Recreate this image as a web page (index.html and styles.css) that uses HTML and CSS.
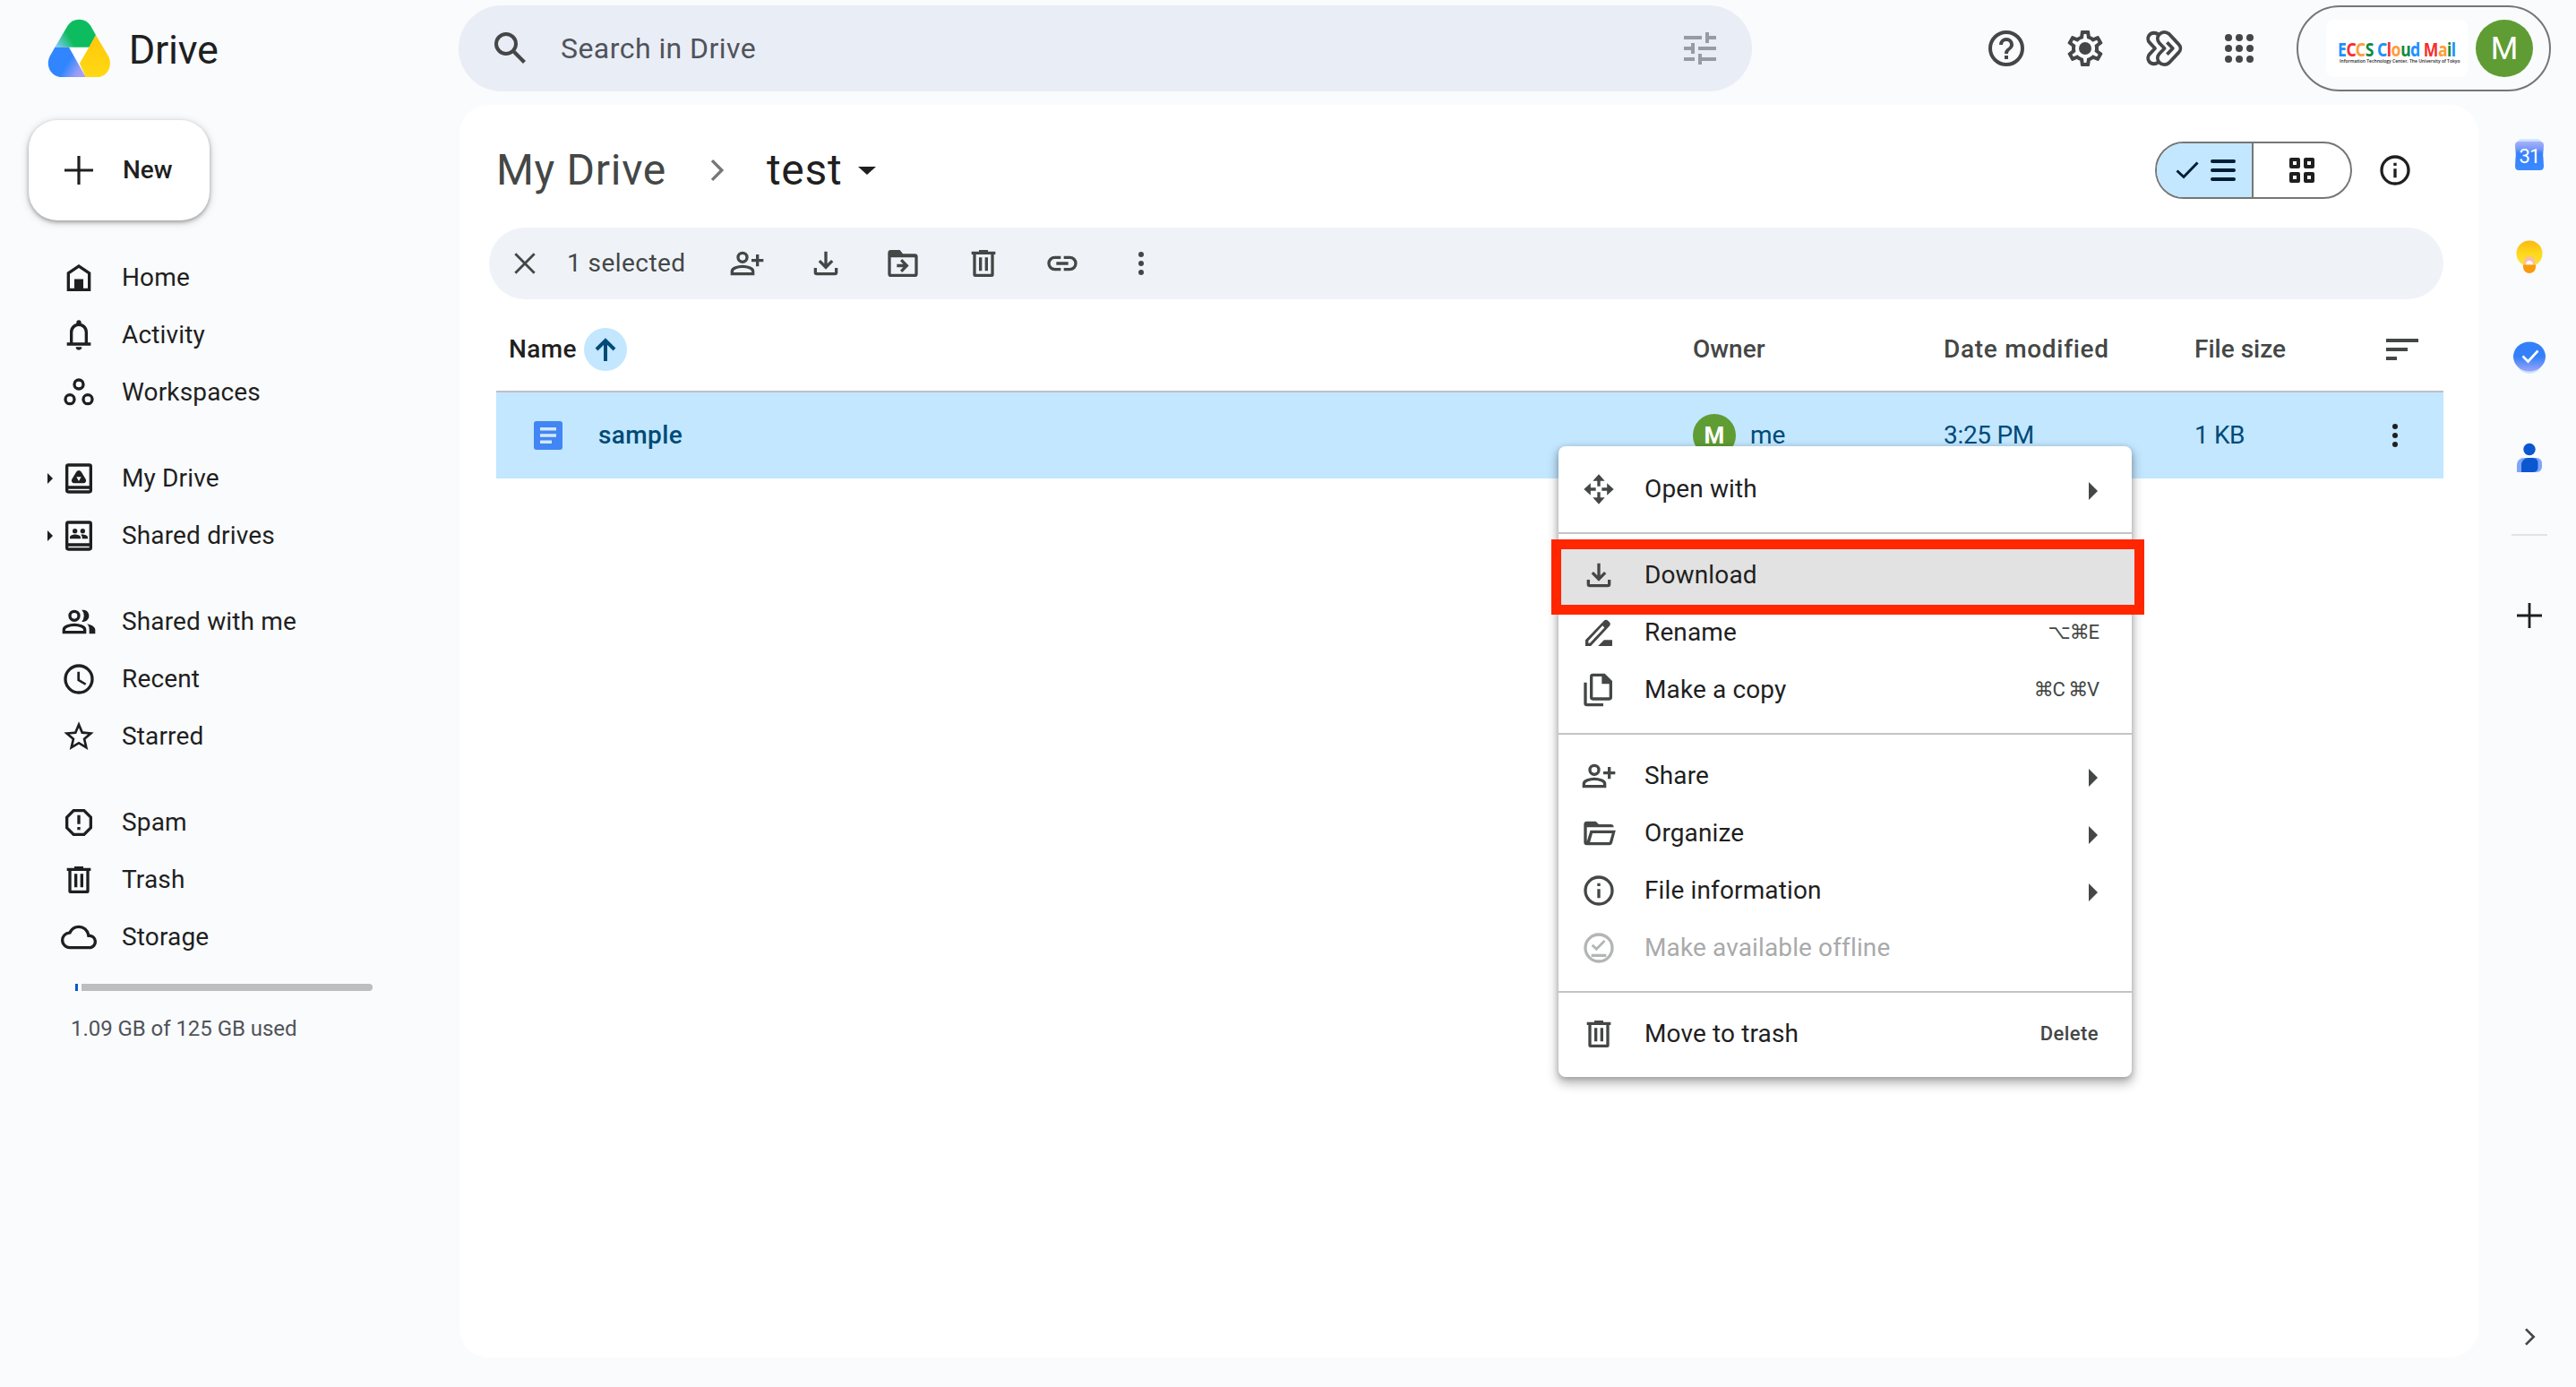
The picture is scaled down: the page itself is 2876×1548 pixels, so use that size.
FILE: index.html
```html
<!DOCTYPE html>
<html lang="en">
<head>
<meta charset="utf-8">
<title>test - Google Drive</title>
<link rel="stylesheet" href="styles.css">
</head>
<body>
<svg class="sprite" aria-hidden="true">
  <symbol id="i-plus" viewBox="0 0 24 24"><path d="M11.2 4h1.6v7.2H20v1.6h-7.2V20h-1.6v-7.2H4v-1.6h7.2z"/></symbol>
  <symbol id="i-home" viewBox="0 0 24 24"><path fill-rule="evenodd" d="M12 3l8 5.4V21H4V8.400zM6 9.500V19h3v-6h6v6h3V9.500L12 5.400z"/><path d="M9 13h6v7H9z"/></symbol>
  <symbol id="i-bell" viewBox="0 0 24 24"><path fill-rule="evenodd" d="M4 19v-2h2v-7c0-2.800 1.800-5.100 4.400-5.800v-.700a1.600 1.600 0 013.200 0v.700C16.200 4.900 18 7.200 18 10v7h2v2zM8 17h8v-7a4 4 0 00-8 0zM10 20h4a2 2 0 01-4 0z"/></symbol>
  <symbol id="i-work" viewBox="0 0 24 24"><g fill="none" stroke="currentColor" stroke-width="2"><circle cx="12" cy="6" r="3"/><circle cx="6" cy="16" r="3"/><circle cx="18" cy="16" r="3"/></g></symbol>
  <symbol id="i-mydrive" viewBox="0 0 24 24"><path fill-rule="evenodd" d="M5 2h14a2 2 0 012 2v16a2 2 0 01-2 2H5a2 2 0 01-2-2V4a2 2 0 012-2zm0 2v13h14V4zm0 15v1h14v-1z"/><path fill-rule="evenodd" d="M10.400 7.500a1.850 1.850 0 013.200 0l2.900 4.800a1.800 1.800 0 01-1.600 2.900H9.100a1.800 1.800 0 01-1.600-2.900zM10.400 11l1.600 2.800 1.600-2.800z"/></symbol>
  <symbol id="i-shdrive" viewBox="0 0 24 24"><path fill-rule="evenodd" d="M5 2h14a2 2 0 012 2v16a2 2 0 01-2 2H5a2 2 0 01-2-2V4a2 2 0 012-2zm0 2v13h14V4zm0 15v1h14v-1z"/><circle cx="9.400" cy="8.800" r="1.600"/><circle cx="14.600" cy="8.800" r="1.600"/><path d="M6 14v-.900c0-1.400 2-2 3.500-2s3.700.600 3.700 2v.900zM14.200 14v-1c0-.700-.3-1.300-.9-1.800 1.800-.3 4.700.3 4.700 1.900v.9z"/></symbol>
  <symbol id="i-people" viewBox="0 0 24 24"><g fill="none" stroke="currentColor" stroke-width="2"><circle cx="9" cy="8" r="3"/><path d="M2 19v-1.800C2 15.200 6 14 9 14s7 1.200 7 3.200V19z"/></g><path d="M14 4.100A4 4 0 1114 11.900 6 6 0 0014 4.100zM17.500 13.300c2.600.5 5.500 1.800 5.500 3.900V20h-4v-3c0-1.600-.5-2.800-1.500-3.700z"/></symbol>
  <symbol id="i-clock" viewBox="0 0 24 24"><circle cx="12" cy="12" r="9" fill="none" stroke="currentColor" stroke-width="2"/><path d="M11 7h1.600v5.200l4.400 2.600-.8 1.300L11 13z"/></symbol>
  <symbol id="i-star" viewBox="0 0 24 24"><path d="M22 9.240l-7.190-.620L12 2 9.190 8.630 2 9.240l5.460 4.730L5.820 21 12 17.270 18.180 21l-1.630-7.030zM12 15.400l-3.760 2.270 1-4.280-3.320-2.880 4.380-.380L12 6.100l1.710 4.040 4.380.38-3.320 2.880 1 4.280z"/></symbol>
  <symbol id="i-spam" viewBox="0 0 24 24"><path d="M8.500 4h7L20 8.500v7L15.500 20h-7L4 15.500v-7z" fill="none" stroke="currentColor" stroke-width="2"/><path d="M11 7h2v6h-2zM11 15h2v2h-2z"/></symbol>
  <symbol id="i-trash" viewBox="0 0 24 24"><path fill-rule="evenodd" d="M9 3h6v1h5v2h-1v13.500a1.500 1.500 0 01-1.500 1.500h-11A1.500 1.500 0 015 19.500V6H4V4h5zM7 6v13h10V6zM9 8h2v9H9zM13 8h2v9h-2z"/></symbol>
  <symbol id="i-cloud" viewBox="0 0 24 24"><path d="M19.350 10.040A7.490 7.490 0 0012 4C9.110 4 6.600 5.640 5.350 8.040A5.994 5.994 0 000 14c0 3.310 2.690 6 6 6h13c2.760 0 5-2.240 5-5 0-2.640-2.050-4.780-4.650-4.960zM19 18H6c-2.210 0-4-1.790-4-4 0-2.050 1.530-3.760 3.560-3.970l1.070-.110.5-.950A5.469 5.469 0 0112 6c2.620 0 4.880 1.860 5.390 4.430l.300 1.500 1.530.110A2.980 2.980 0 0122 15c0 1.650-1.350 3-3 3z"/></symbol>
  <symbol id="i-search" viewBox="0 0 24 24"><path d="M20.490 19l-5.730-5.730C15.530 12.200 16 10.910 16 9.500A6.500 6.500 0 109.500 16c1.410 0 2.700-.470 3.770-1.240L19 20.490zM5 9.500a4.500 4.500 0 119 0 4.500 4.500 0 01-9 0z"/></symbol>
  <symbol id="i-tune" viewBox="0 0 24 24"><path d="M3 17v2h6v-2H3zM3 5v2h10V5H3zm10 16v-2h8v-2h-8v-2h-2v6h2zM7 9v2H3v2h4v2h2V9H7zm14 4v-2H11v2h10zm-6-4h2V7h4V5h-4V3h-2v6z"/></symbol>
  <symbol id="i-help" viewBox="0 0 24 24"><circle cx="12" cy="12" r="9" fill="none" stroke="currentColor" stroke-width="2"/><path d="M11 16h2v2h-2zM12 6a4 4 0 00-4 4h2a2 2 0 114 0c0 2-3 1.750-3 5h2c0-2.250 3-2.500 3-5a4 4 0 00-4-4z"/></symbol>
  <symbol id="i-gear" viewBox="0 0 24 24"><path d="M19.430 12.980c.040-.320.070-.640.070-.980 0-.340-.030-.660-.070-.980l2.110-1.650c.190-.150.240-.420.120-.640l-2-3.460a.5.5 0 00-.610-.220l-2.490 1c-.520-.400-1.080-.730-1.690-.980l-.380-2.650A.488.488 0 0014 2h-4c-.250 0-.460.180-.490.420l-.380 2.650c-.610.250-1.170.590-1.690.980l-2.490-1a.566.566 0 00-.180-.030c-.170 0-.340.090-.430.250l-2 3.460c-.130.220-.070.490.120.640l2.110 1.650c-.040.320-.070.650-.070.980s.030.660.070.980l-2.110 1.650c-.190.150-.240.420-.120.640l2 3.460a.5.5 0 00.610.220l2.490-1c.520.400 1.080.730 1.690.980l.380 2.650c.030.240.240.420.490.420h4c.250 0 .460-.180.490-.420l.380-2.650c.610-.250 1.170-.590 1.690-.980l2.490 1c.060.020.120.030.180.030.170 0 .340-.090.430-.250l2-3.460c.120-.220.070-.490-.120-.640zm-1.980-1.710c.040.310.050.520.050.730 0 .210-.020.430-.050.730l-.140 1.130.890.700 1.080.840-.700 1.210-1.270-.510-1.040-.420-.900.680c-.430.320-.840.560-1.250.730l-1.060.430-.160 1.130-.200 1.350h-1.400l-.190-1.350-.160-1.130-1.060-.430c-.430-.180-.830-.410-1.230-.710l-.910-.700-1.060.430-1.270.510-.700-1.210 1.080-.840.890-.700-.140-1.130c-.030-.310-.050-.540-.050-.740s.020-.430.050-.730l.140-1.130-.890-.700-1.080-.840.700-1.210 1.270.510 1.040.420.900-.680c.430-.320.840-.560 1.250-.730l1.060-.430.160-1.130.200-1.350h1.390l.190 1.350.160 1.130 1.060.430c.430.180.830.410 1.230.710l.910.700 1.060-.430 1.270-.510.700 1.210-1.070.850-.890.700z"/><circle cx="12" cy="12" r="3.500"/></symbol>
  <symbol id="i-gem" viewBox="0 0 24 24"><g fill="none" stroke="currentColor" stroke-width="1.900" stroke-linejoin="round"><path d="M9.200 4.600C7.700 2.900 4.900 3 3.700 4.700c-.9 1.300-.8 3 .3 4.100l3 3.200-3 3.200c-1.100 1.100-1.200 2.800-.3 4.100 1.200 1.700 4 1.800 5.500.1"/><path d="M9.500 4.100c1.500-1.500 3.800-1.500 5.400-.1l5.300 5.700c1.300 1.300 1.300 3.300 0 4.600l-5.300 5.700c-1.600 1.400-3.900 1.400-5.400-.1-1.400-1.400-1.400-3.400-.1-4.900l2.900-3-2.900-3c-1.300-1.500-1.300-3.500.1-4.900z"/><path d="M13.700 8.600l3.200 3.400-3.200 3.400"/></g></symbol>
  <symbol id="i-apps" viewBox="0 0 24 24"><circle cx="6" cy="6" r="2"/><circle cx="12" cy="6" r="2"/><circle cx="18" cy="6" r="2"/><circle cx="6" cy="12" r="2"/><circle cx="12" cy="12" r="2"/><circle cx="18" cy="12" r="2"/><circle cx="6" cy="18" r="2"/><circle cx="12" cy="18" r="2"/><circle cx="18" cy="18" r="2"/></symbol>
  <symbol id="i-close" viewBox="0 0 24 24"><path d="M5.600 5.600l12.800 12.800M18.400 5.600L5.600 18.400" fill="none" stroke="currentColor" stroke-width="1.700"/></symbol>
  <symbol id="i-adduser" viewBox="0 0 24 24"><g fill="none" stroke="currentColor" stroke-width="2"><circle cx="9" cy="8" r="3"/><path d="M2 19v-1.800C2 15.200 6 14 9 14s7 1.200 7 3.200V19z"/></g><path d="M18 6h2v3h3v2h-3v3h-2v-3h-3V9h3z"/></symbol>
  <symbol id="i-download" viewBox="0 0 24 24"><path d="M11 4h2v8.200l2.600-2.600L17 11l-5 5-5-5 1.400-1.400 2.600 2.600zM4 15h2v3h12v-3h2v3a2 2 0 01-2 2H6a2 2 0 01-2-2z"/></symbol>
  <symbol id="i-move" viewBox="0 0 24 24"><path fill-rule="evenodd" d="M4 3h6l2 2.500h8a2 2 0 012 2V19a2 2 0 01-2 2H4a2 2 0 01-2-2V5a2 2 0 012-2zm0 5v11h16V8z"/><path d="M11.600 9l4.400 4.500-4.400 4.500-1.400-1.400 2-2.100H8v-2h4.200l-2-2.100z"/></symbol>
  <symbol id="i-link" viewBox="0 0 24 24"><path d="M17 7h-4v2h4a3 3 0 010 6h-4v2h4a5 5 0 000-10zM11 15H7a3 3 0 010-6h4V7H7a5 5 0 000 10h4zM8 11h8v2H8z"/></symbol>
  <symbol id="i-more" viewBox="0 0 24 24"><circle cx="12" cy="6" r="1.800"/><circle cx="12" cy="12" r="1.800"/><circle cx="12" cy="18" r="1.800"/></symbol>
  <symbol id="i-info" viewBox="0 0 24 24"><circle cx="12" cy="12" r="9" fill="none" stroke="currentColor" stroke-width="2"/><path d="M11 7h2v2h-2zM11 11h2v6h-2z"/></symbol>
  <symbol id="i-sort" viewBox="0 0 24 24"><path d="M3 18h6v-2H3zM3 6v2h18V6zm0 7h12v-2H3z"/></symbol>
  <symbol id="i-openwith" viewBox="0 0 24 24"><path d="M12 2l4 4.500h-3V10h-2V6.500H8zM12 22l4-4.500h-3V14h-2v3.500H8zM2 12l4.500-4v3H10v2H6.500v3zM22 12l-4.500-4v3H14v2h3.500v3z"/></symbol>
  <symbol id="i-rename" viewBox="0 0 24 24"><path fill-rule="evenodd" d="M3 21v-4L15.500 4c.8-.8 1.800-.8 2.600 0l1 1c.8.800.8 1.800 0 2.600L6.700 21zm2-2h1L15.800 8.700l-1.300-1.300L5 17.500zM11.500 21l4-4H21v4z"/></symbol>
  <symbol id="i-copy" viewBox="0 0 24 24"><path fill-rule="evenodd" d="M8 1h8l5 5v11a2 2 0 01-2 2H8a2 2 0 01-2-2V3a2 2 0 012-2zm0 2v14h11V8h-5V3z"/><path d="M2 7h2v14h11v2H4a2 2 0 01-2-2z"/></symbol>
  <symbol id="i-folder" viewBox="0 0 24 24"><path fill-rule="evenodd" d="M4 4h6l2 2h8a2 2 0 012 2H4v9.500L6.300 10H23.300l-2.300 8.600a2 2 0 01-1.900 1.400H4a2 2 0 01-2-2V6a2 2 0 012-2zm3.800 8l-1.700 6h13l1.700-6z"/></symbol>
  <symbol id="i-offline" viewBox="0 0 24 24"><circle cx="12" cy="12" r="9" fill="none" stroke="currentColor" stroke-width="2"/><path d="M7 16h10v2H7zM16.500 7.800L10.400 14 7 10.600l1.200-1.200 2.200 2.200 4.900-5z"/></symbol>
  <symbol id="i-chevron" viewBox="0 0 24 24"><path d="M9 5.500l6.500 6.500L9 18.500" fill="none" stroke="currentColor" stroke-width="2"/></symbol>
</svg>

<div class="app">
  <header class="topbar">
    <a class="brand">
      <svg class="brand-logo" viewBox="158 62 212 197">
        <defs>
          <linearGradient id="gg" gradientUnits="userSpaceOnUse" x1="188" y1="158" x2="236" y2="128"><stop offset="0" stop-color="#86cbff"/><stop offset=".35" stop-color="#5cc7c4"/><stop offset="1" stop-color="#0dbc5f"/></linearGradient>
          <linearGradient id="gb" gradientUnits="userSpaceOnUse" x1="218" y1="222" x2="268" y2="252"><stop offset="0" stop-color="#3186ff"/><stop offset=".7" stop-color="#8f9cf5"/><stop offset="1" stop-color="#a79df5"/></linearGradient>
          <linearGradient id="gy" x1="0" y1="0" x2="0" y2="1"><stop offset="0" stop-color="#ffc808"/><stop offset="1" stop-color="#ffd814"/></linearGradient>
        </defs>
        <path fill="#fff" d="M230 157h68l-32 54z"/>
        <path fill="url(#gg)" d="M225 86Q239 64 264 64T303 86L320 117 298 157H183z"/>
        <path fill="url(#gb)" d="M183 157H230L286 257H206C170 257 150 219 166 187z"/>
        <path fill="url(#gy)" d="M320 117L362 187C378 219 358 257 325 257H286L266 211z"/>
      </svg>
      <span class="brand-name">Drive</span>
    </a>
    <div class="search">
      <svg class="ic48"><use href="#i-search"/></svg>
      <span class="search-text">Search in Drive</span>
      <svg class="ic48 tune"><use href="#i-tune"/></svg>
    </div>
    <div class="tools">
      <svg class="ic48"><use href="#i-help"/></svg>
      <svg class="ic48"><use href="#i-gear"/></svg>
      <svg class="ic48"><use href="#i-gem"/></svg>
      <svg class="ic48 apps"><use href="#i-apps"/></svg>
    </div>
    <div class="account">
      <div class="org">
        <div class="org-name"><b class="bl">E</b><b class="rd">C</b><b class="or">C</b><b class="gr">S</b> <b class="bl">C</b><b class="rd">l</b><b class="or">o</b><b class="gr">u</b><b class="bl">d</b> <b class="rd">M</b><b class="or">a</b><b class="gr">i</b><b class="bl">l</b></div>
        <div class="org-sub">Information Technology Center, The University of Tokyo</div>
      </div>
      <div class="avatar">M</div>
    </div>
  </header>

  <div class="body">
    <aside class="sidebar">
      <button class="new"><svg class="ic48"><use href="#i-plus"/></svg><span>New</span></button>
      <nav class="nav">
        <ul class="group">
          <li><i></i><svg class="ic40"><use href="#i-home"/></svg><span>Home</span></li>
          <li><i></i><svg class="ic40"><use href="#i-bell"/></svg><span>Activity</span></li>
          <li><i></i><svg class="ic40 low"><use href="#i-work"/></svg><span>Workspaces</span></li>
        </ul>
        <ul class="group">
          <li><i class="caret"></i><svg class="ic40"><use href="#i-mydrive"/></svg><span>My Drive</span></li>
          <li><i class="caret"></i><svg class="ic40"><use href="#i-shdrive"/></svg><span>Shared drives</span></li>
        </ul>
        <ul class="group">
          <li><i></i><svg class="ic40"><use href="#i-people"/></svg><span>Shared with me</span></li>
          <li><i></i><svg class="ic40"><use href="#i-clock"/></svg><span>Recent</span></li>
          <li><i></i><svg class="ic40"><use href="#i-star"/></svg><span>Starred</span></li>
        </ul>
        <ul class="group">
          <li><i></i><svg class="ic40"><use href="#i-spam"/></svg><span>Spam</span></li>
          <li><i></i><svg class="ic40"><use href="#i-trash"/></svg><span>Trash</span></li>
          <li><i></i><svg class="ic40"><use href="#i-cloud"/></svg><span>Storage</span></li>
        </ul>
      </nav>
      <div class="quota"><span class="used"></span><span class="free"></span></div>
      <div class="quota-text">1.09 GB of 125 GB used</div>
    </aside>

    <main class="panel">
      <div class="crumbs">
        <span class="crumb">My Drive</span>
        <svg class="ic40 sep"><use href="#i-chevron"/></svg>
        <span class="crumb current">test</span>
        <i class="drop"></i>
        <div class="view-toggle">
          <div class="seg on">
            <svg class="check" viewBox="0 0 26 20"><path d="M1.500 10.500l7.500 7L24.500 1.500" fill="none" stroke="currentColor" stroke-width="3"/></svg>
            <svg class="lines" viewBox="0 0 28 24"><path d="M2 2h24M2 12h24M2 22h24" fill="none" stroke="currentColor" stroke-width="4" stroke-linecap="round"/></svg>
          </div>
          <div class="seg">
            <svg class="gridic" viewBox="0 0 28 28"><g fill="none" stroke="currentColor" stroke-width="4" stroke-linejoin="round"><path d="M2 2h8v8H2zM18 2h8v8h-8zM2 18h8v8H2zM18 18h8v8h-8z"/></g></svg>
          </div>
        </div>
        <svg class="ic40 info"><use href="#i-info"/></svg>
      </div>

      <div class="selbar">
        <svg class="ic40"><use href="#i-close"/></svg>
        <span class="sel-text">1 selected</span>
        <div class="sel-actions">
          <svg class="ic40"><use href="#i-adduser"/></svg>
          <svg class="ic40"><use href="#i-download"/></svg>
          <svg class="ic40 mv"><use href="#i-move"/></svg>
          <svg class="ic40"><use href="#i-trash"/></svg>
          <svg class="ic40"><use href="#i-link"/></svg>
          <svg class="ic40"><use href="#i-more"/></svg>
        </div>
      </div>

      <div class="table">
        <div class="tr head">
          <div class="name"><span class="dark">Name</span><span class="sortdot"><svg viewBox="0 0 24 26"><path d="M12 26V3M2 13L12 3l10 10" fill="none" stroke="currentColor" stroke-width="4"/></svg></span></div>
          <div>Owner</div>
          <div class="date">Date modified</div>
          <div class="last"><span>File size</span><svg class="ic48"><use href="#i-sort"/></svg></div>
        </div>
        <div class="tr file">
          <div class="fname"><svg class="doc" viewBox="0 0 32 32"><rect width="32" height="32" rx="3" fill="#4285f4"/><path d="M7 7h18v3.500H7zM7 14.200h18v3.500H7zM7 21.400h13v3.500H7z" fill="#d3e8fc"/></svg><span>sample</span></div>
          <div class="owner"><span class="mini">M</span>me</div>
          <div class="time">3:25 PM</div>
          <div class="last"><span>1 KB</span><svg class="ic40 rowmore"><use href="#i-more"/></svg></div>
        </div>
      </div>
    </main>

    <aside class="rail">
      <svg class="app-ic" viewBox="0 0 40 40"><defs><linearGradient id="cal" x1="0" y1="0" x2="0" y2="1"><stop offset="0" stop-color="#a9b0fb"/><stop offset=".25" stop-color="#7a9cf8"/><stop offset=".4" stop-color="#3880fb"/><stop offset="1" stop-color="#3a8bff"/></linearGradient></defs><rect x="6" y="1.500" width="28" height="10" rx="5" fill="#c4e2ff"/><path fill="url(#cal)" d="M8 4h24c3 0 4 1.500 4 4.500 0 5-1.500 9-.5 14l.5 9c0 3-1.500 4.500-4 4.500H8c-2.500 0-4-1.500-4-4.500l.5-9c1-5-.5-9-.5-14C4 5.500 5 4 8 4z"/><text x="20" y="27.500" text-anchor="middle" class="cal-num">31</text></svg>
      <svg class="app-ic" viewBox="0 0 40 40"><defs><linearGradient id="kp" x1="0" y1="0" x2="0" y2="1"><stop offset="0" stop-color="#fdb813"/><stop offset=".55" stop-color="#fedb1c"/><stop offset="1" stop-color="#fde04a"/></linearGradient><radialGradient id="kg"><stop offset="0" stop-color="#fcb6cd"/><stop offset=".5" stop-color="#fbb7bd"/><stop offset="1" stop-color="#fdc94b" stop-opacity="0"/></radialGradient></defs><circle cx="20" cy="16" r="14.500" fill="url(#kp)"/><circle cx="20" cy="25" r="8" fill="url(#kg)"/><path d="M16 28.500a4 4.500 0 018 0z" fill="#fff"/><path d="M13 28.500h14v2.500a7 7 0 01-14 0z" fill="#f99c0b"/></svg>
      <svg class="app-ic" viewBox="0 0 40 40"><defs><linearGradient id="tk" x1="0" y1="0" x2="0" y2="1"><stop offset=".5" stop-color="#3380fa"/><stop offset="1" stop-color="#9ba4f8"/></linearGradient></defs><ellipse cx="20" cy="28" rx="13" ry="10" fill="#cbe3ff"/><ellipse cx="20" cy="19" rx="18" ry="16.500" fill="url(#tk)"/><path d="M12.500 18.500l6 6 11-12" fill="none" stroke="#fff" stroke-width="2.600"/></svg>
      <svg class="app-ic" viewBox="0 0 40 40"><circle cx="20" cy="9.500" r="6.700" fill="#0b57d0"/><path d="M6 35V27a8 8 0 018-8h14a6 6 0 016 6v4a6 6 0 01-6 6z" fill="#7fa4fb"/><path d="M11 35V27a8 8 0 018-8h5a5.500 5.500 0 015.500 5.500V30a5 5 0 01-5 5z" fill="#0b57d0"/></svg>
      <hr>
      <svg class="ic40 add"><use href="#i-plus"/></svg>
      <svg class="collapse"><use href="#i-chevron"/></svg>
    </aside>
  </div>
</div>

<div class="menu">
  <div class="sec">
    <div class="item"><svg class="ic40"><use href="#i-openwith"/></svg><span>Open with</span><i class="sub"></i></div>
  </div>
  <div class="sec">
    <div class="item active"><svg class="ic40"><use href="#i-download"/></svg><span>Download</span></div>
    <div class="item"><svg class="ic40"><use href="#i-rename"/></svg><span>Rename</span><kbd>⌥⌘E</kbd></div>
    <div class="item"><svg class="ic40"><use href="#i-copy"/></svg><span>Make a copy</span><kbd>⌘C ⌘V</kbd></div>
  </div>
  <div class="sec">
    <div class="item"><svg class="ic40"><use href="#i-adduser"/></svg><span>Share</span><i class="sub"></i></div>
    <div class="item"><svg class="ic40"><use href="#i-folder"/></svg><span>Organize</span><i class="sub"></i></div>
    <div class="item"><svg class="ic40"><use href="#i-info"/></svg><span>File information</span><i class="sub"></i></div>
    <div class="item off"><svg class="ic40"><use href="#i-offline"/></svg><span>Make available offline</span></div>
  </div>
  <div class="sec">
    <div class="item"><svg class="ic40"><use href="#i-trash"/></svg><span>Move to trash</span><kbd class="word">Delete</kbd></div>
  </div>
</div>
</body>
</html>
```
FILE: styles.css
```css
* { box-sizing: border-box; }
body {
  margin: 0;
  width: 2876px;
  height: 1548px;
  position: relative;
  overflow: hidden;
  background: #f9fbfd;
  color: #1f1f1f;
  font: 28px/40px Roboto, "Noto Sans", sans-serif;
}
svg { display: block; flex: none; fill: currentColor; overflow: visible; }
.sprite { position: absolute; width: 0; height: 0; }
.ic40 { width: 40px; height: 40px; }
.ic48 { width: 48px; height: 48px; }

.app { display: flex; flex-direction: column; height: 1548px; }

/* top bar */
.topbar { display: flex; height: 117px; padding-top: 6px; align-items: flex-start; color: #444746; }
.brand { display: flex; align-items: center; width: 512px; height: 96px; padding-left: 53px; gap: 20px; color: #1f1f1f; }
.brand-logo { width: 70.700px; height: 65.700px; }
.brand-name { font-size: 45px; letter-spacing: -.2px; padding-top: 3px; }
.search { display: flex; align-items: center; width: 1444px; height: 96px; padding: 0 34px; border-radius: 48px; background: #e9edf6; }
.search-text { flex: 1; font-size: 32px; letter-spacing: .45px; margin-left: 32px; color: #50535a; }
.tune { color: #979ba4; }
.tools { display: flex; align-items: center; height: 96px; gap: 40px; margin-left: 260px; }
.tools .apps { margin-left: -4px; }
.account { display: flex; align-items: center; justify-content: space-between; width: 284px; height: 96px; margin-left: 40px; padding: 0 18px 0 31px; border: 2px solid #747775; border-radius: 48px; }
.org { width: 158px; height: 64px; border-radius: 8px; background: #fff; padding: 20px 0 0 13px; white-space: nowrap; }
.org-name { width: max-content; font: 700 22px/24px "Noto Sans", "Open Sans", sans-serif; letter-spacing: -.6px; height: 23px; transform: scaleX(.8); transform-origin: 0 0; }
.org-name b { font-weight: 700; }
.org-sub { font: 600 5px/7px "Open Sans", sans-serif; color: #222; padding-left: 2px; }
.bl { color: #1e90ff; } .rd { color: #f52f2f; } .or { color: #fb9f3c; } .gr { color: #0f8a43; }
.avatar { width: 64px; height: 64px; border-radius: 50%; background: #5f9c33; color: #fff; font-size: 35px; line-height: 65px; text-align: center; }

/* columns */
.body { display: grid; grid-template-columns: 513px 2254px 109px; height: 1398px; }
.sidebar { padding-top: 17px; }
.new { display: flex; align-items: center; gap: 25px; width: 202px; height: 112px; margin: 0 0 32px 32px; padding: 0 0 0 32px; border: 0; border-radius: 32px; background: #fff; color: #1f1f1f; font: 500 28px Roboto, sans-serif; box-shadow: 0 2px 4px rgba(0,0,0,.3), 0 2px 8px 2px rgba(0,0,0,.12); }
.new span { padding-bottom: 2px; }
.group { list-style: none; margin: 0 0 32px; padding: 0; }
.group li { display: flex; align-items: center; height: 64px; padding-left: 53px; }
.group i { width: 15px; }
.group .low { position: relative; top: 1px; }
.caret::before { content: ""; display: block; width: 0; border: solid transparent; border-width: 6.500px 0 6.500px 6px; border-left-color: #1f1f1f; }
.group span { margin-left: 28px; letter-spacing: .15px; }
.quota { display: flex; width: 332px; height: 8px; margin: -12px 0 0 84px; gap: 4px; }
.used { width: 3px; background: #0b57d0; }
.free { flex: 1; background: #bcbec1; border-radius: 0 4px 4px 0; }
.quota-text { margin: 22px 0 0 79px; font-size: 24px; letter-spacing: -.05px; color: #50535a; }

/* file panel */
.panel { background: #fff; border-radius: 32px; padding: 41px 39px 0 33px; }
.crumbs { display: flex; align-items: center; height: 64px; padding-left: 8px; font-size: 48px; }
.crumb { color: #444746; letter-spacing: .7px; }
.crumb.current { color: #1f1f1f; }
.sep { color: #747775; margin: 0 36px 0 36px; }
.drop { border: solid transparent; border-width: 9px 10px 0; border-top-color: #1f1f1f; margin-left: 18px; }
.view-toggle { display: flex; width: 220px; height: 64px; margin-left: auto; border: 2px solid #747775; border-radius: 32px; overflow: hidden; }
.seg { display: flex; align-items: center; justify-content: center; width: 108px; }
.seg.on { background: #c2e7ff; color: #001d35; border-right: 2px solid #747775; gap: 13px; padding-left: 2px; }
.check { width: 26px; height: 20px; }
.lines { width: 28px; height: 24px; }
.gridic { width: 28px; height: 28px; }
.info { margin: 0 34px 0 28px; }
.selbar { display: flex; align-items: center; height: 80px; margin-top: 32px; padding-left: 20px; border-radius: 40px; background: #eff3f8; color: #444746; }
.sel-text { width: 180px; margin-left: 27px; letter-spacing: .45px; }
.sel-actions { display: flex; gap: 48px; margin-left: 1px; }
.sel-actions .mv { margin: 0 2px 0 -2px; }

.table { margin: 10px 0 0 8px; }
.tr { display: grid; grid-template-columns: 1336px 280px 280px 278px; align-items: center; }
.tr > div { display: flex; align-items: center; }
.head { height: 94px; border-bottom: 2px solid #bfc1c3; font-weight: 500; color: #444746; }
.name { padding-left: 14px; gap: 8px; }
.dark { color: #1f1f1f; letter-spacing: .4px; }
.date { letter-spacing: .7px; }
.time { letter-spacing: -.3px; }
.sortdot { display: flex; align-items: center; justify-content: center; width: 48px; height: 48px; border-radius: 50%; background: #c2e7ff; color: #004a77; }
.sortdot svg { width: 24px; height: 26px; }
.last { justify-content: space-between; padding-right: 22px; }
.file { height: 96px; background: #c2e7ff; color: #004a77; }
.fname { padding-left: 42px; gap: 40px; font-weight: 500; letter-spacing: .4px; }
.doc { width: 32px; height: 32px; }
.mini { width: 48px; height: 48px; margin-right: 16px; border-radius: 50%; background: #5f9c33; color: #fff; font-weight: 700; font-size: 26px; line-height: 49px; text-align: center; }
.file .last { letter-spacing: -.4px; }
.rowmore { margin-right: 12px; color: #1f1f1f; }

/* side rail */
.rail { display: flex; flex-direction: column; align-items: center; padding: 37px 0 7px 5px; }
.app-ic { width: 40px; height: 40px; margin-bottom: 72.500px; }
.cal-num { font: 400 22px Roboto, sans-serif; letter-spacing: -.8px; fill: #fff; }
.rail hr { width: 40px; height: 2px; margin: -8px 0 68px; border: 0; background: #e1e4e8; }
.add { width: 42px; height: 42px; }
.collapse { width: 32px; height: 32px; margin-top: auto; color: #444746; }

/* context menu */
.menu { position: absolute; left: 1740px; top: 498px; width: 640px; height: 704px; border-radius: 8px; background: #fff; box-shadow: 0 6px 12px 2px rgba(0,0,0,.25), 0 2px 6px rgba(0,0,0,.2); }
.sec { padding: 16px 0; }
.sec + .sec { border-top: 2px solid #c4c4c4; padding-top: 14px; }
.item { display: flex; align-items: center; height: 64px; padding: 0 37px 0 25px; }
.item svg { color: #444746; }
.item span { flex: 1; margin-left: 31px; letter-spacing: .13px; }
.item.off span { color: #a9aaab; }
.item.off svg { color: #b4b5b5; }
.sub { border: solid transparent; border-width: 10px 0 10px 10px; border-left-color: #444746; position: relative; top: 2px; margin-right: 1px; }
kbd { font: 400 22px/40px Roboto, "DejaVu Sans", sans-serif; letter-spacing: -1.100px; color: #444746; }
kbd.word { font-weight: 500; letter-spacing: .45px; }
.active { position: relative; z-index: 1; }
.active::after { content: ""; position: absolute; z-index: -1; left: -8px; right: -14px; top: -8px; bottom: -12px; border: 11px solid #ff2600; background: #e2e2e2; }
```
